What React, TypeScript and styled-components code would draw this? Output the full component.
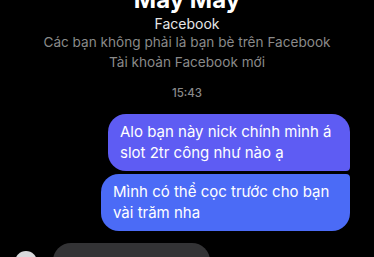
import React from "react";
import styled, { createGlobalStyle } from "styled-components";

const Global = createGlobalStyle`
  html, body { margin: 0; padding: 0; background: #000; }
  body { width: 374px; height: 257px; overflow: hidden; font-family: Inter, "Noto Sans", sans-serif; -webkit-font-smoothing: antialiased; }
`;

const Screen = styled.div`
  width: 374px;
  height: 257px;
  background: #000;
  overflow: hidden;
  display: flex;
  flex-direction: column;
`;

const Header = styled.div`
  display: flex;
  flex-direction: column;
  align-items: center;
  margin-top: -14px;
`;

const Title = styled.div`
  color: #fff;
  font-size: 24px;
  font-weight: 700;
  line-height: 28px;
`;

const Source = styled.div`
  color: #e6e6e6;
  font-size: 14px;
  line-height: 18px;
  margin-top: 1px;
`;

const Note = styled.div`
  color: #8a8a8a;
  font-size: 13.6px;
  line-height: 20px;
  margin-top: ${(p: { $first?: boolean }) => (p.$first ? "-1px" : "0")};
`;

const Time = styled.div`
  align-self: center;
  color: #8a8a8a;
  font-size: 11.5px;
  font-weight: 500;
  line-height: 14px;
  margin-top: 14px;
`;

const Outgoing = styled.div`
  display: flex;
  flex-direction: column;
  align-items: flex-end;
  gap: 3px;
  padding-right: 24px;
  margin-top: 14px;
`;

const Bubble = styled.div<{ $bg: string; $radius: string; $w: number }>`
  box-sizing: border-box;
  width: ${(p) => p.$w}px;
  background: ${(p) => p.$bg};
  border-radius: ${(p) => p.$radius};
  color: #fff;
  font-size: 15px;
  line-height: 20.5px;
  padding: 8px 12px;
`;

const IncomingRow = styled.div`
  display: flex;
  align-items: flex-start;
  gap: 16px;
  padding-left: 15px;
  margin-top: 12px;
`;

const Avatar = styled.div`
  width: 22px;
  height: 22px;
  border-radius: 50%;
  background: #d9d9dc;
  margin-top: 8px;
  flex-shrink: 0;
`;

const IncomingBubble = styled.div`
  background: #333335;
  border-radius: 18px;
  color: #fff;
  font-size: 15px;
  line-height: 20.5px;
  padding: 11px 12px 8px;
  width: 133px;
`;

export default function App() {
  return (
    <Screen>
      <Global />
      <Header>
        <Title>Mây Mây</Title>
        <Source>Facebook</Source>
        <Note $first>Các bạn không phải là bạn bè trên Facebook</Note>
        <Note>Tài khoản Facebook mới</Note>
      </Header>
      <Time>15:43</Time>
      <Outgoing>
        <Bubble $bg="#5e5cf3" $radius="18px 18px 4px 18px" $w={242}>
          Alo bạn này nick chính mình á slot 2tr công như nào ạ
        </Bubble>
        <Bubble $bg="#4b6bf6" $radius="18px 4px 18px 18px" $w={249}>
          Mình có thể cọc trước cho bạn vài trăm nha
        </Bubble>
      </Outgoing>
      <IncomingRow>
        <Avatar />
        <IncomingBubble>Không được bạn ơi</IncomingBubble>
      </IncomingRow>
    </Screen>
  );
}
